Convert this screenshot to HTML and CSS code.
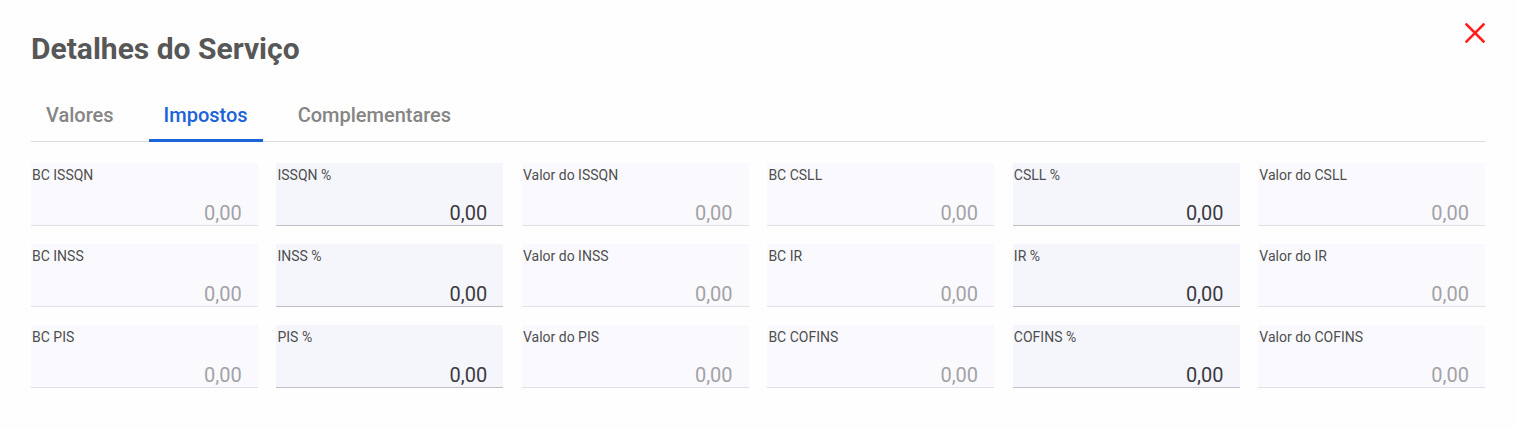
FILE: index.html
```html
<!DOCTYPE html>
<html lang="pt-BR">
<head>
<meta charset="utf-8">
<title>Detalhes do Serviço</title>
<link rel="stylesheet" href="styles.css">
</head>
<body>
<div class="dialog">
  <div class="header">
    <h1 class="title">Detalhes do Serviço</h1>
    <button class="close" aria-label="Fechar">
      <svg width="20" height="20" viewBox="0 0 20 20"><path d="M1.5 1.5 L18.5 18.5 M18.5 1.5 L1.5 18.5" stroke="#ff1f1f" stroke-width="2.6" stroke-linecap="square" fill="none"/></svg>
    </button>
  </div>
  <div class="tabs">
    <div class="tab">Valores</div>
    <div class="tab active">Impostos</div>
    <div class="tab">Complementares</div>
  </div>
  <div class="grid">
    <div class="field ro"><span class="label">BC ISSQN</span><span class="value">0,00</span></div>
    <div class="field ed"><span class="label">ISSQN %</span><span class="value">0,00</span></div>
    <div class="field ro"><span class="label">Valor do ISSQN</span><span class="value">0,00</span></div>
    <div class="field ro"><span class="label">BC CSLL</span><span class="value">0,00</span></div>
    <div class="field ed"><span class="label">CSLL %</span><span class="value">0,00</span></div>
    <div class="field ro"><span class="label">Valor do CSLL</span><span class="value">0,00</span></div>

    <div class="field ro"><span class="label">BC INSS</span><span class="value">0,00</span></div>
    <div class="field ed"><span class="label">INSS %</span><span class="value">0,00</span></div>
    <div class="field ro"><span class="label">Valor do INSS</span><span class="value">0,00</span></div>
    <div class="field ro"><span class="label">BC IR</span><span class="value">0,00</span></div>
    <div class="field ed"><span class="label">IR %</span><span class="value">0,00</span></div>
    <div class="field ro"><span class="label">Valor do IR</span><span class="value">0,00</span></div>

    <div class="field ro"><span class="label">BC PIS</span><span class="value">0,00</span></div>
    <div class="field ed"><span class="label">PIS %</span><span class="value">0,00</span></div>
    <div class="field ro"><span class="label">Valor do PIS</span><span class="value">0,00</span></div>
    <div class="field ro"><span class="label">BC COFINS</span><span class="value">0,00</span></div>
    <div class="field ed"><span class="label">COFINS %</span><span class="value">0,00</span></div>
    <div class="field ro"><span class="label">Valor do COFINS</span><span class="value">0,00</span></div>
  </div>
</div>
</body>
</html>
```

FILE: styles.css
```css
* { box-sizing: border-box; }
html, body { margin: 0; padding: 0; }
body {
  background: #fefefe;
  font-family: Roboto, "Liberation Sans", sans-serif;
  width: 1517px;
  height: 428px;
  overflow: hidden;
}
.dialog {
  padding: 23px 32px 0 31px;
}
.header {
  display: flex;
  justify-content: space-between;
  align-items: flex-start;
}
.title {
  margin: 8px 0 0 0;
  font-size: 30px;
  font-weight: 700;
  color: #575757;
  line-height: 36px;
}
.close {
  border: 0;
  background: none;
  padding: 0;
  width: 20px;
  height: 20px;
  cursor: pointer;
}
.close svg { display: block; }
.tabs {
  display: flex;
  gap: 20px;
  margin-top: 33px;
  border-bottom: 1px solid #dcdcdc;
  padding-left: 0;
}
.tab {
  padding: 0 15px;
  height: 42px;
  line-height: 31px;
  font-size: 20px;
  font-weight: 500;
  color: #858585;
  border-bottom: 3px solid transparent;
  margin-bottom: -1px;
}
.tab.active {
  color: #1a63d8;
  border-bottom-color: #1a63d8;
}
.grid {
  display: grid;
  grid-template-columns: repeat(6, 1fr);
  column-gap: 18.8px;
  row-gap: 18px;
  margin-top: 21px;
}
.field {
  height: 63px;
  display: flex;
  flex-direction: column;
  justify-content: space-between;
  padding: 3px 16px 0 1px;
  border-bottom: 1px solid #e2e2e6;
}
.field.ro { background: #fafafe; }
.field.ed { background: #f5f6fc; border-bottom-color: #bfc0c6; }
.label {
  font-size: 14px;
  font-weight: 400;
  color: #4e4e4e;
  line-height: 18px;
}
.value {
  text-align: right;
  font-size: 20px;
  line-height: 24px;
  color: #a2a2a6;
}
.field.ed .value { color: #3a3a3e; }
```
